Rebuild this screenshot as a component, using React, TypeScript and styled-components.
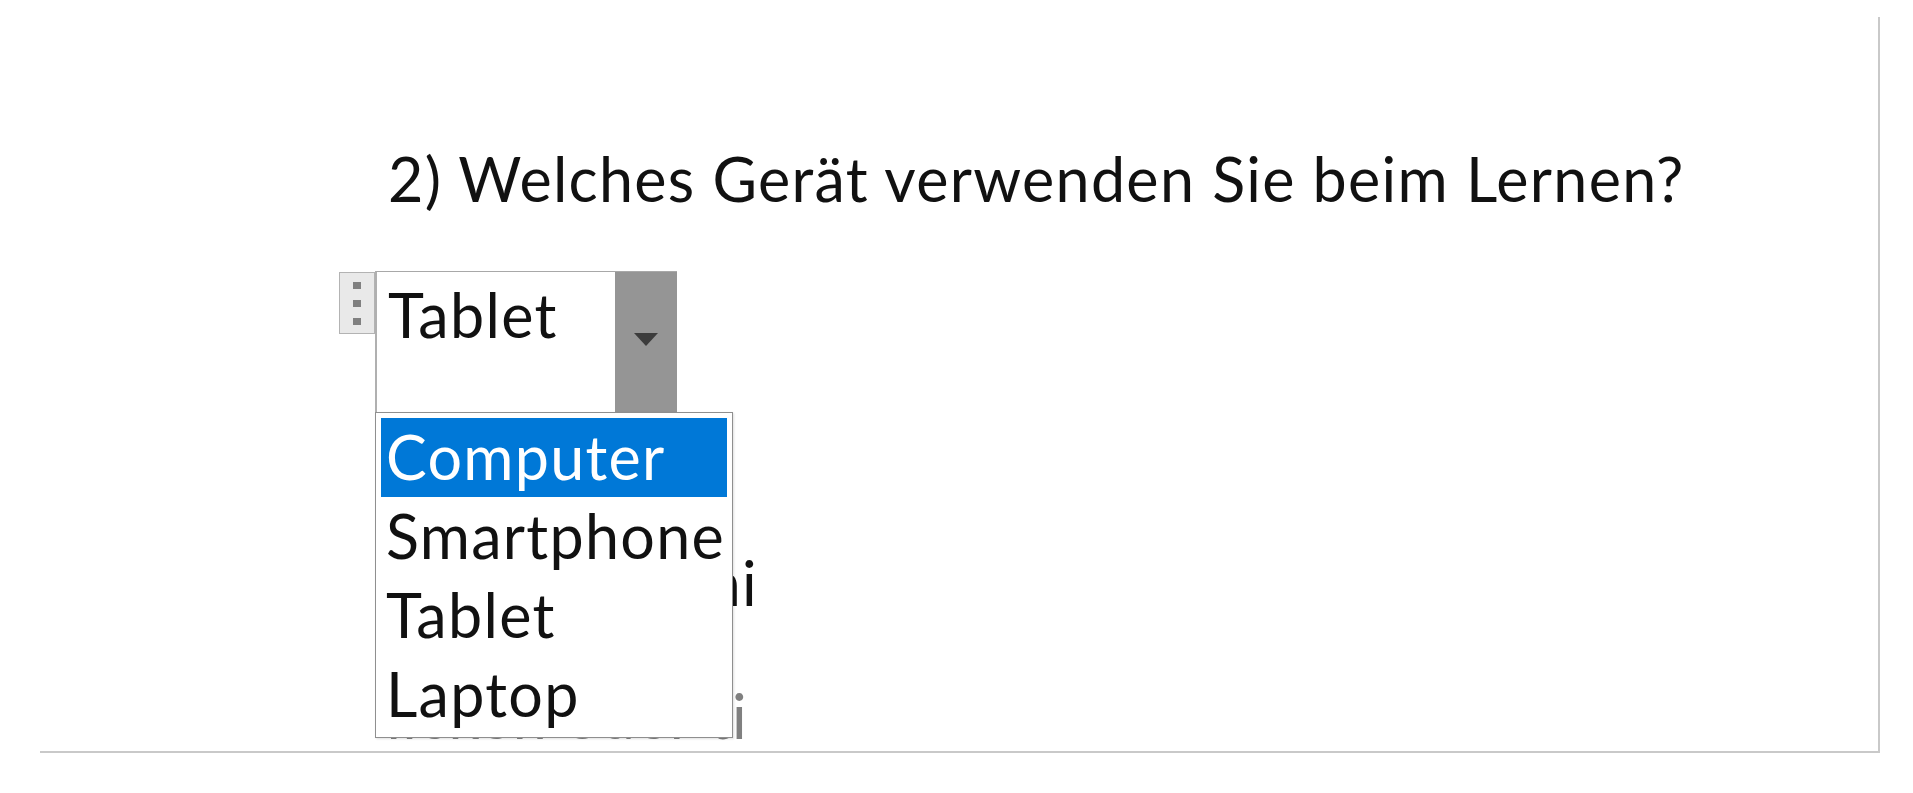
import styled, { createGlobalStyle } from "styled-components";

const GlobalStyle = createGlobalStyle`
  html, body {
    margin: 0;
    padding: 0;
    background: #ffffff;
  }
  body {
    font-family: Lato, "Liberation Sans", sans-serif;
    color: #111111;
  }
`;

const options = ["Computer", "Smartphone", "Tablet", "Laptop"];

const Page = styled.div`
  box-sizing: border-box;
  margin: 17px 0 0 40px;
  width: 1840px;
  height: 736px;
  border-right: 2px solid #c9c9c9;
  border-bottom: 2px solid #c9c9c9;
  overflow: hidden;
`;

const Question = styled.h2`
  margin: 127px 0 0 348px;
  font-weight: 400;
  font-size: 61px;
  line-height: 70px;
  letter-spacing: 1.3px;
  white-space: nowrap;
  color: #111111;
`;

const ControlRow = styled.div`
  display: flex;
  align-items: flex-start;
  margin: 57px 0 0 299px;
`;

const Handle = styled.div`
  box-sizing: border-box;
  width: 36px;
  height: 62px;
  margin-top: 1px;
  background: #e9e9e9;
  border: 1px solid #b3b3b3;
  display: flex;
  flex-direction: column;
  align-items: center;
  gap: 11px;
  padding-top: 9px;
`;

const Dot = styled.span`
  width: 8px;
  height: 7px;
  background: #808080;
`;

const Select = styled.div`
  position: relative;
  box-sizing: border-box;
  width: 302px;
  height: 141px;
  display: flex;
  border-top: 1px solid #a8a8a8;
  border-left: 2px solid #b0b0b0;
`;

const Value = styled.div`
  flex: 1;
  padding: 8px 0 0 11px;
  font-size: 61px;
  line-height: 70px;
  letter-spacing: 1.3px;
  background: #ffffff;
`;

const ArrowButton = styled.div`
  width: 62px;
  background: #959595;
  display: flex;
  justify-content: center;
  padding-top: 61px;
  box-sizing: border-box;
`;

const List = styled.ul`
  position: absolute;
  top: 140px;
  left: -2px;
  box-sizing: border-box;
  width: 358px;
  height: 326px;
  margin: 0;
  padding: 5px 5px 0;
  list-style: none;
  background: #ffffff;
  border: 1px solid #8f8f8f;
  box-shadow: 1px 1px 2px rgba(0, 0, 0, 0.12);
  z-index: 2;
`;

const Option = styled.li<{ $active?: boolean }>`
  height: 79px;
  padding-left: 5px;
  font-size: 61px;
  line-height: 78px;
  letter-spacing: 1.3px;
  white-space: nowrap;
  background: ${(p) => (p.$active ? "#0078d7" : "transparent")};
  color: ${(p) => (p.$active ? "#ffffff" : "#111111")};
`;

const BehindLine = styled.div<{ $width: number; $gap: number; $muted?: boolean }>`
  display: flex;
  justify-content: flex-end;
  width: ${(p) => p.$width}px;
  margin: ${(p) => p.$gap}px 0 0 348px;
  overflow: hidden;
  white-space: nowrap;
  font-size: 61px;
  line-height: 70px;
  letter-spacing: 1.3px;
  color: ${(p) => (p.$muted ? "#808080" : "#111111")};
`;

const Arrow = () => (
  <svg width="24" height="13" viewBox="0 0 24 13">
    <path d="M0 0 L24 0 L12 13 Z" fill="#3c3c3c" />
  </svg>
);

export default function App() {
  return (
    <>
      <GlobalStyle />
      <Page>
        <Question>2) Welches Gerät verwenden Sie beim Lernen?</Question>
        <ControlRow>
          <Handle>
            <Dot />
            <Dot />
            <Dot />
          </Handle>
          <Select>
            <Value>Tablet</Value>
            <ArrowButton>
              <Arrow />
            </ArrowButton>
            <List>
              {options.map((o, i) => (
                <Option key={o} $active={i === 0}>
                  {o}
                </Option>
              ))}
            </List>
          </Select>
        </ControlRow>
        <BehindLine $width={370} $gap={136}>
          <span>3) Welche Lern-Apps nutzen Sie? Anki oder Mochi</span>
        </BehindLine>
        <BehindLine $width={360} $gap={63} $muted>
          <span>Klicken oder ti</span>
        </BehindLine>
      </Page>
    </>
  );
}
